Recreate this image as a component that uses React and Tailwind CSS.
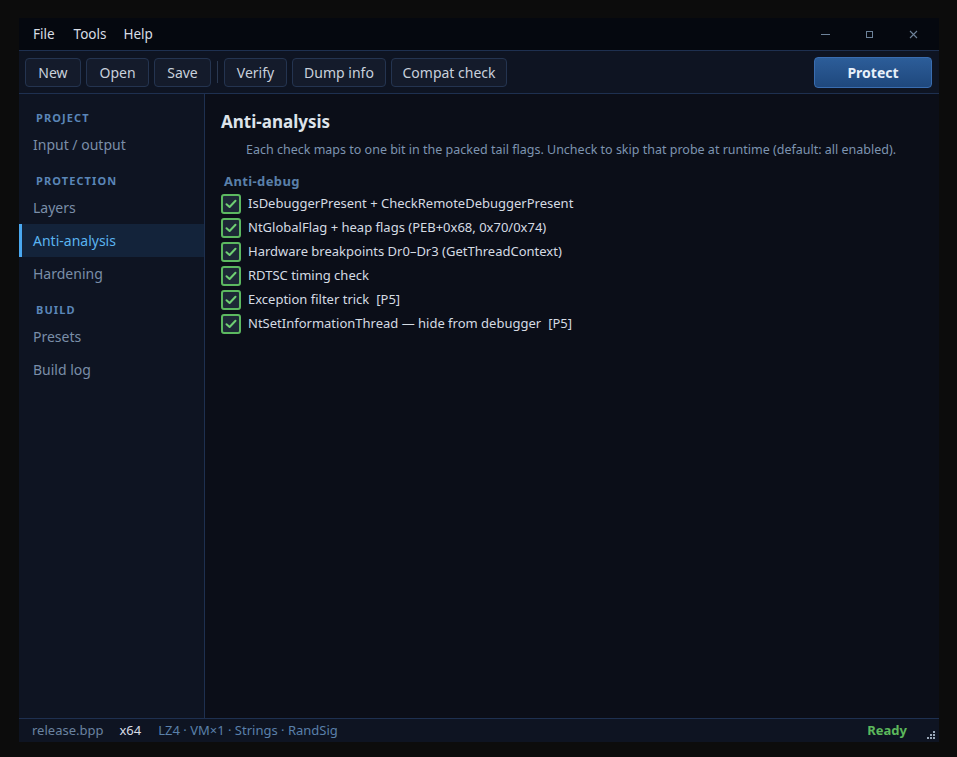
import { useState } from "react";

const FONT = { fontFamily: '"Noto Sans", "Open Sans", sans-serif' };

const toolbar = [
  { label: "New", w: "w-[56px]" },
  { label: "Open", w: "w-[63px]" },
  { label: "Save", w: "w-[57px]" },
  null,
  { label: "Verify", w: "w-[63px]" },
  { label: "Dump info", w: "w-[94px]" },
  { label: "Compat check", w: "w-[116px]" },
];

const nav = [
  { section: "PROJECT", items: ["Input / output"] },
  { section: "PROTECTION", items: ["Layers", "Anti-analysis", "Hardening"] },
  { section: "BUILD", items: ["Presets", "Build log"] },
];

const checks = [
  { label: "IsDebuggerPresent + CheckRemoteDebuggerPresent" },
  { label: "NtGlobalFlag + heap flags (PEB+0x68, 0x70/0x74)" },
  { label: "Hardware breakpoints Dr0\u2013Dr3 (GetThreadContext)" },
  { label: "RDTSC timing check" },
  { label: "Exception filter trick", tag: "[P5]" },
  { label: "NtSetInformationThread \u2014 hide from debugger", tag: "[P5]" },
];

function CheckBox({ on, onToggle }) {
  return (
    <button
      onClick={onToggle}
      className="w-[20px] h-[20px] rounded-[3px] border-2 border-[#5cb860] bg-[#1d2836] flex items-center justify-center"
    >
      {on && (
        <svg width="12" height="10" viewBox="0 0 12 10">
          <path d="M1.5 5.2 L4.6 8 L10.5 1.8" fill="none" stroke="#6fcf73" strokeWidth="2" strokeLinecap="round" strokeLinejoin="round" />
        </svg>
      )}
    </button>
  );
}

export default function App() {
  const [active, setActive] = useState("Anti-analysis");
  const [state, setState] = useState(checks.map(() => true));

  return (
    <div className="w-[957px] h-[757px] bg-[#0c0c0c] pt-[18px] pl-[19px]" style={FONT}>
      <div className="w-[920px] h-[724px] flex flex-col bg-[#0b0e18]">
        {/* ---------- menu bar ---------- */}
        <div className="h-[33px] shrink-0 flex items-center bg-[#05080f] border-b border-[#1e3050] text-[13.5px] text-[#d8dde5]">
          <span className="ml-[14px]">File</span>
          <span className="ml-[19px]">Tools</span>
          <span className="ml-[17px]">Help</span>
          <div className="ml-auto flex items-center text-[#6d8299]">
            <span className="w-[44px] flex justify-center">
              <span className="w-[9px] h-px bg-[#6d8299]" />
            </span>
            <span className="w-[44px] flex justify-center">
              <span className="w-[7px] h-[7px] border border-[#6d8299]" />
            </span>
            <span className="w-[44px] flex justify-center mr-[4px]">
              <svg width="9" height="9" viewBox="0 0 9 9">
                <path d="M1 1 L8 8 M8 1 L1 8" stroke="#6d8299" strokeWidth="1.1" />
              </svg>
            </span>
          </div>
        </div>

        {/* ---------- toolbar ---------- */}
        <div className="h-[43px] shrink-0 flex items-center px-[6px] gap-[5px] bg-[#0e1422] border-b border-[#1e3050]">
          {toolbar.map((b, i) =>
            b ? (
              <button
                key={b.label}
                className={`${b.w} h-[29px] rounded-[4px] border border-[#243450] bg-[#141b2b] text-[14px] text-[#c8d0dc]`}
              >
                {b.label}
              </button>
            ) : (
              <span key={i} className="w-px h-[22px] bg-[#2a3850] mx-[1px]" />
            )
          )}
          <button className="ml-auto mr-[1px] w-[118px] h-[31px] rounded-[4px] border border-[#3a6db0] bg-gradient-to-b from-[#2c5d99] to-[#1f487d] text-[14px] font-bold text-[#e8f0fa]">
            Protect
          </button>
        </div>

        {/* ---------- body ---------- */}
        <div className="flex-1 flex min-h-0">
          <aside className="w-[186px] shrink-0 bg-[#0e1422] border-r border-[#1e3050] pt-[4px]">
            {nav.map((g) => (
              <div key={g.section}>
                <div className="h-[30px] pt-[12px] pl-[17px] text-[11px] leading-[16px] font-bold tracking-[0.1em] text-[#5a86b8]">
                  {g.section}
                </div>
                {g.items.map((it) => {
                  const on = it === active;
                  return (
                    <div
                      key={it}
                      onClick={() => setActive(it)}
                      className={`h-[33px] flex items-center pl-[11px] text-[14px] border-l-[3px] ${
                        on
                          ? "border-[#4aa8f0] bg-[#13233a] text-[#5ab4f0]"
                          : "border-transparent text-[#7a8ea8]"
                      }`}
                    >
                      {it}
                    </div>
                  );
                })}
              </div>
            ))}
          </aside>

          <main className="flex-1 pl-[16px] pt-[16px]">
            <h1 className="text-[17px] leading-[24px] font-bold text-[#dde3ea]">Anti-analysis</h1>
            <p className="mt-[7px] pl-[25px] text-[12.5px] leading-[18px] text-[#7d94b0]">
              Each check maps to one bit in the packed tail flags. Uncheck to skip that probe at runtime (default: all enabled).
            </p>
            <div className="mt-[13px] pl-[3px] text-[13px] leading-[18px] font-bold tracking-[0.03em] text-[#5a80aa]">
              Anti-debug
            </div>
            <div className="mt-[2px] flex flex-col">
              {checks.map((c, i) => (
                <div key={c.label} className="h-[24px] flex items-center gap-[7px] text-[13px] text-[#d5dbe3]">
                  <CheckBox
                    on={state[i]}
                    onToggle={() => setState(state.map((v, j) => (j === i ? !v : v)))}
                  />
                  <span>
                    {c.label}
                    {c.tag && <span className="ml-[7px]">{c.tag}</span>}
                  </span>
                </div>
              ))}
            </div>
          </main>
        </div>

        {/* ---------- status bar ---------- */}
        <div className="h-[24px] shrink-0 flex items-center bg-[#0e1422] border-t border-[#1e3050] text-[13px] pl-[13px] relative">
          <span className="text-[#6a83a0]">release.bpp</span>
          <span className="ml-[16px] text-[#d8dde5]">x64</span>
          <span className="ml-[17px] text-[#5a80aa]">LZ4 · VM×1 · Strings · RandSig</span>
          <span className="ml-auto mr-[32px] font-bold text-[#5cb85c]">Ready</span>
          <svg className="absolute right-[4px] bottom-[3px]" width="8" height="8" viewBox="0 0 8 8">
            <rect x="6" y="0" width="2" height="2" fill="#9aa8b8" />
            <rect x="3" y="3" width="2" height="2" fill="#9aa8b8" />
            <rect x="6" y="3" width="2" height="2" fill="#9aa8b8" />
            <rect x="0" y="6" width="2" height="2" fill="#9aa8b8" />
            <rect x="3" y="6" width="2" height="2" fill="#9aa8b8" />
            <rect x="6" y="6" width="2" height="2" fill="#9aa8b8" />
          </svg>
        </div>
      </div>
    </div>
  );
}
